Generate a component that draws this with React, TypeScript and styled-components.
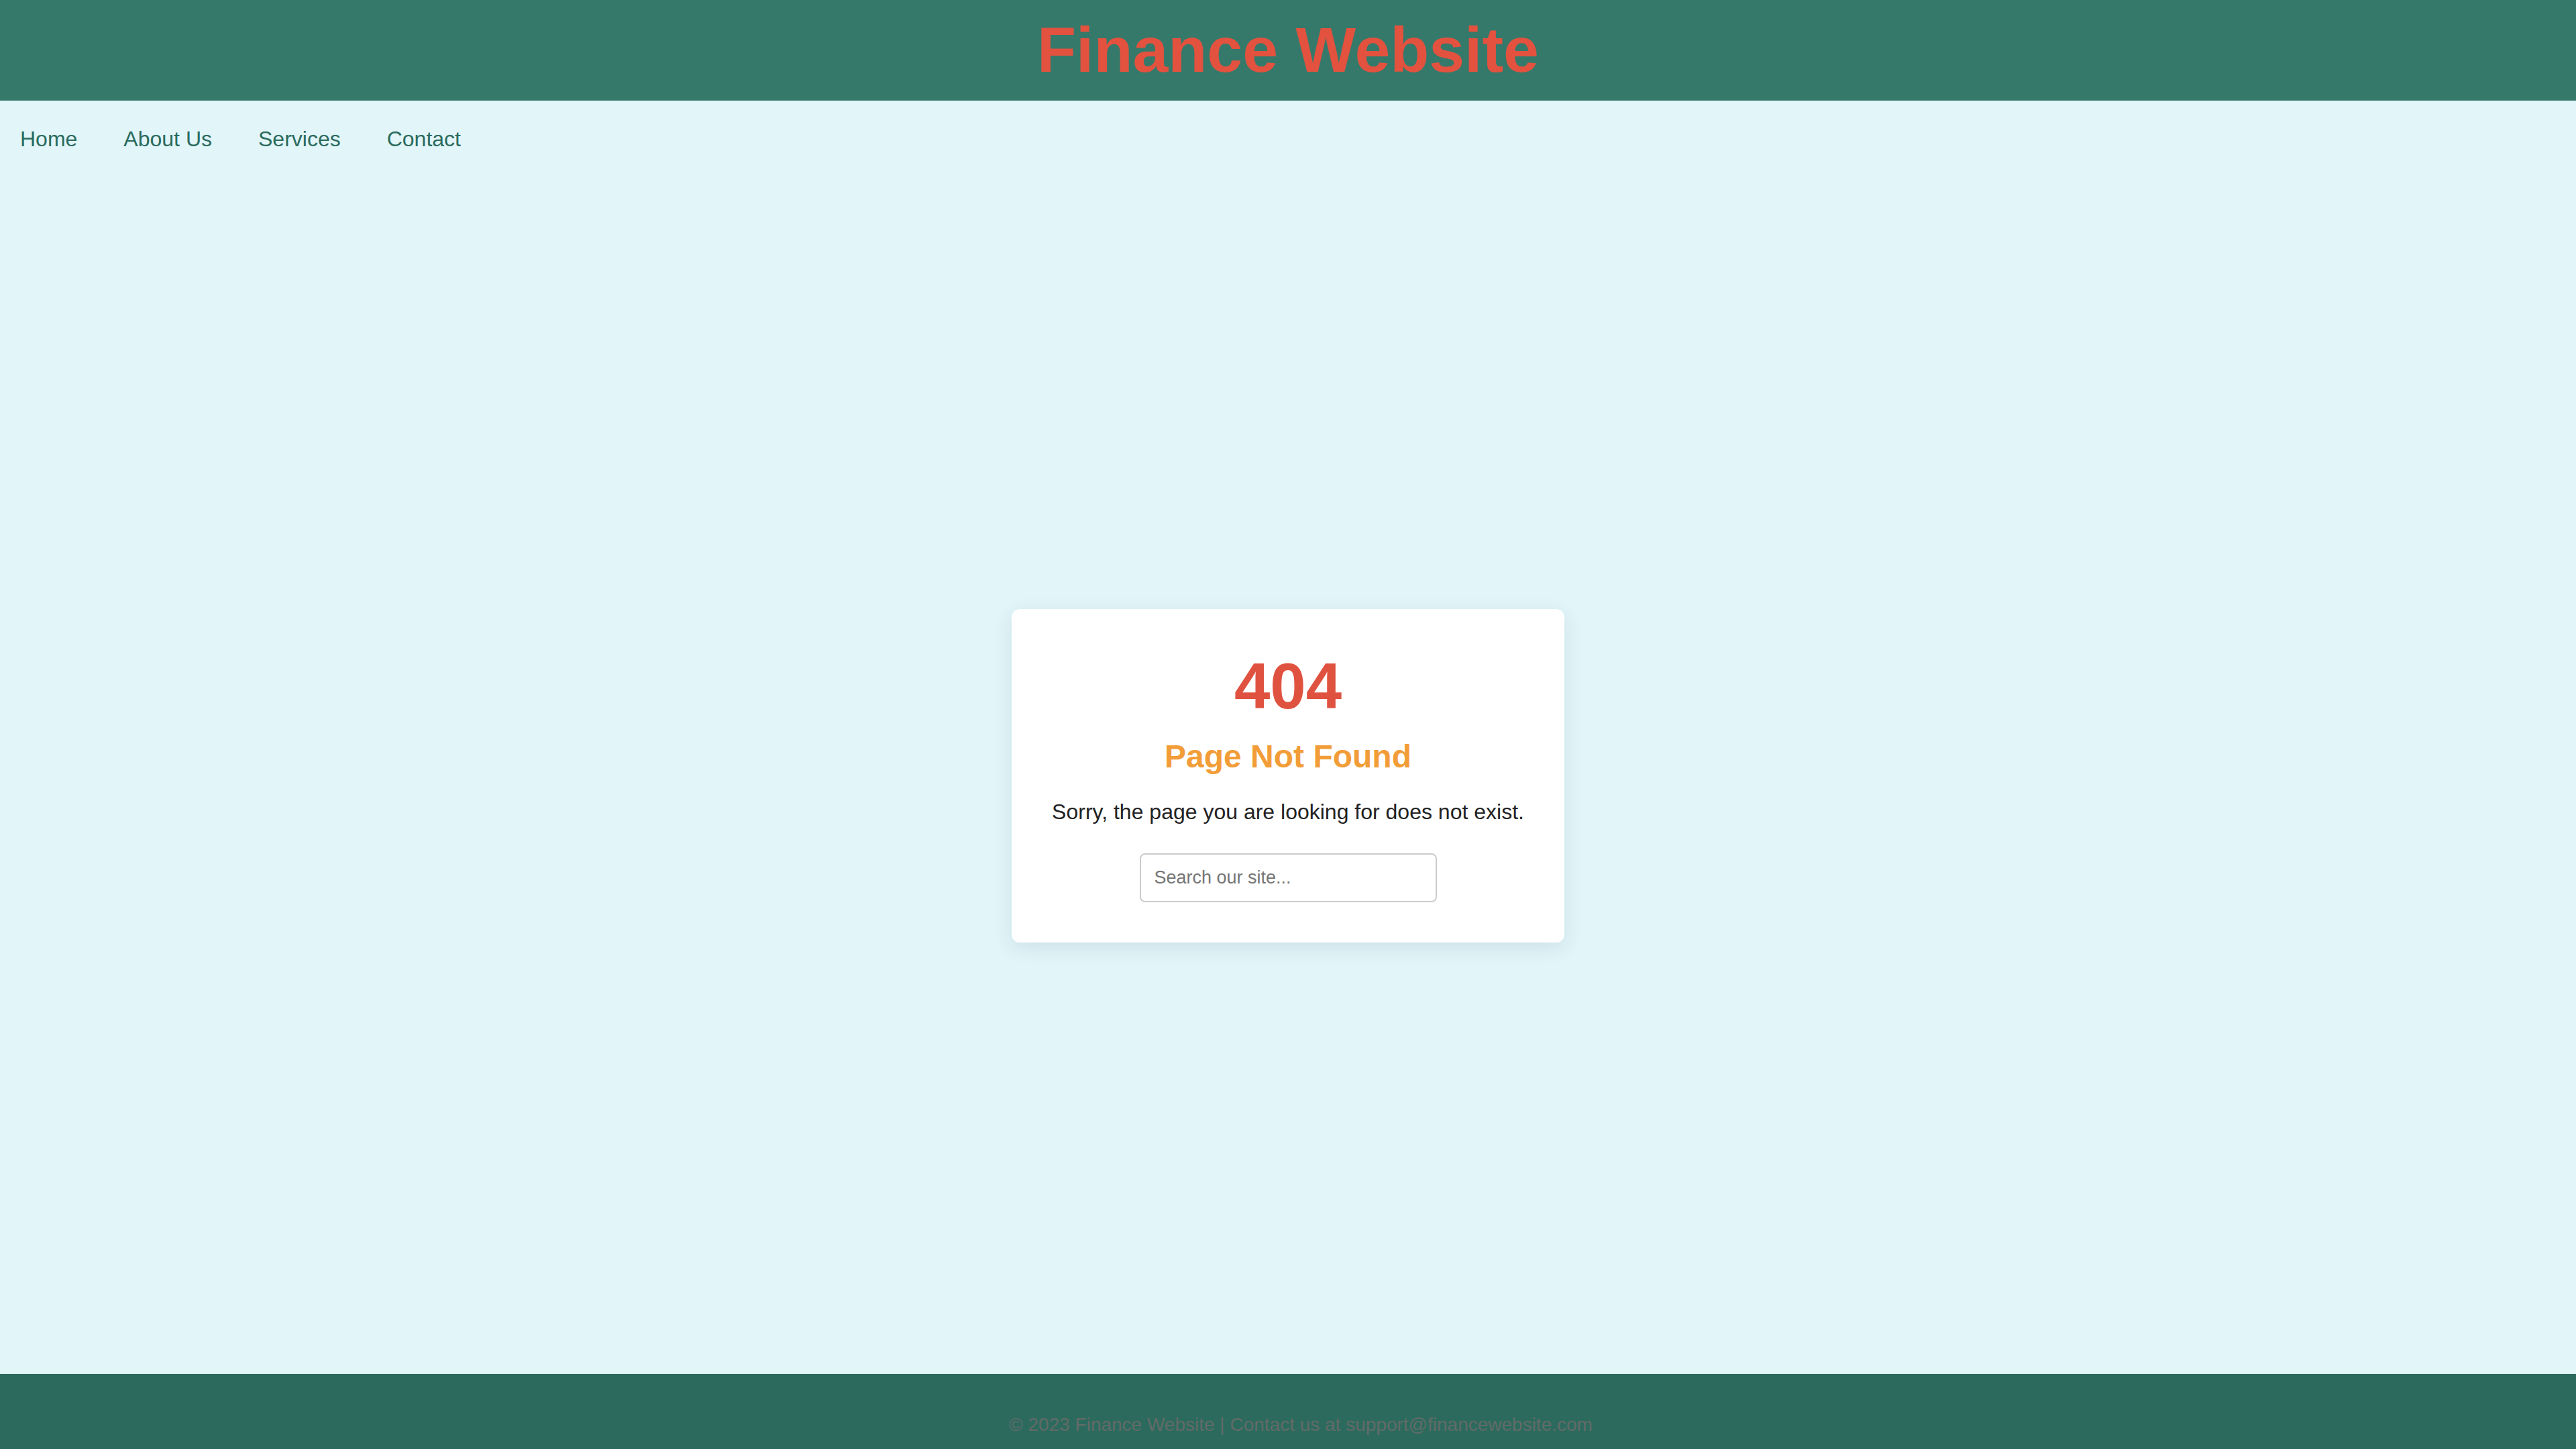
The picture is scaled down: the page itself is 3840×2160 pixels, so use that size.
import React from 'react';
import styled, { createGlobalStyle } from 'styled-components';

const GlobalStyle = createGlobalStyle`
  html, body {
    margin: 0;
    padding: 0;
  }
  body {
    background: #e2f5f9;
    font-family: "Liberation Sans", Arial, sans-serif;
  }
`;

const Header = styled.header`
  background: #35796b;
  height: 150px;
  display: flex;
  align-items: center;
  justify-content: center;
`;

const Title = styled.h1`
  margin: 0;
  color: #e2523f;
  font-size: 95px;
  font-weight: bold;
  line-height: 1;
  padding-bottom: 2px;
`;

const Nav = styled.nav`
  height: 115px;
  display: flex;
  align-items: center;
  gap: 69px;
  padding-left: 30px;
`;

const NavLink = styled.a`
  color: #2a6b5d;
  font-size: 32px;
  text-decoration: none;
  line-height: 1.15;
`;

const Main = styled.main`
  height: 1783px;
  display: flex;
  align-items: center;
  justify-content: center;
`;

const Card = styled.div`
  background: #ffffff;
  border-radius: 12px;
  box-shadow: 0 8px 28px rgba(40, 90, 110, 0.12);
  padding: 60px;
  display: flex;
  flex-direction: column;
  align-items: center;
  text-align: center;
`;

const Code = styled.h2`
  margin: 0 0 21px;
  color: #e05240;
  font-size: 96px;
  font-weight: bold;
  line-height: 1.15;
`;

const Subtitle = styled.h3`
  margin: 0 0 37px;
  color: #f29d38;
  font-size: 48px;
  font-weight: bold;
  line-height: 1.15;
`;

const Message = styled.p`
  margin: 0 0 43px;
  color: #222222;
  font-size: 32px;
  line-height: 1.15;
`;

const SearchInput = styled.input`
  box-sizing: border-box;
  width: 443px;
  height: 73px;
  border: 2px solid #cccccc;
  border-radius: 8px;
  padding: 0 20px;
  font-family: "Liberation Sans", Arial, sans-serif;
  font-size: 27px;
  color: #333;
  outline: none;

  &::placeholder {
    color: #757575;
  }
`;

const Footer = styled.footer`
  background: #2d6a5e;
  padding: 60px 0 56px 38px;
  text-align: center;
`;

const FooterText = styled.p`
  margin: 0;
  color: #626b67;
  font-size: 28px;
  line-height: 1.15;
`;

export default function App() {
  return (
    <>
      <GlobalStyle />
      <Header>
        <Title>Finance Website</Title>
      </Header>
      <Nav>
        <NavLink href="#">Home</NavLink>
        <NavLink href="#">About Us</NavLink>
        <NavLink href="#">Services</NavLink>
        <NavLink href="#">Contact</NavLink>
      </Nav>
      <Main>
        <Card>
          <Code>404</Code>
          <Subtitle>Page Not Found</Subtitle>
          <Message>Sorry, the page you are looking for does not exist.</Message>
          <SearchInput type="text" placeholder="Search our site..." />
        </Card>
      </Main>
      <Footer>
        <FooterText>© 2023 Finance Website | Contact us at support@financewebsite.com</FooterText>
      </Footer>
    </>
  );
}
